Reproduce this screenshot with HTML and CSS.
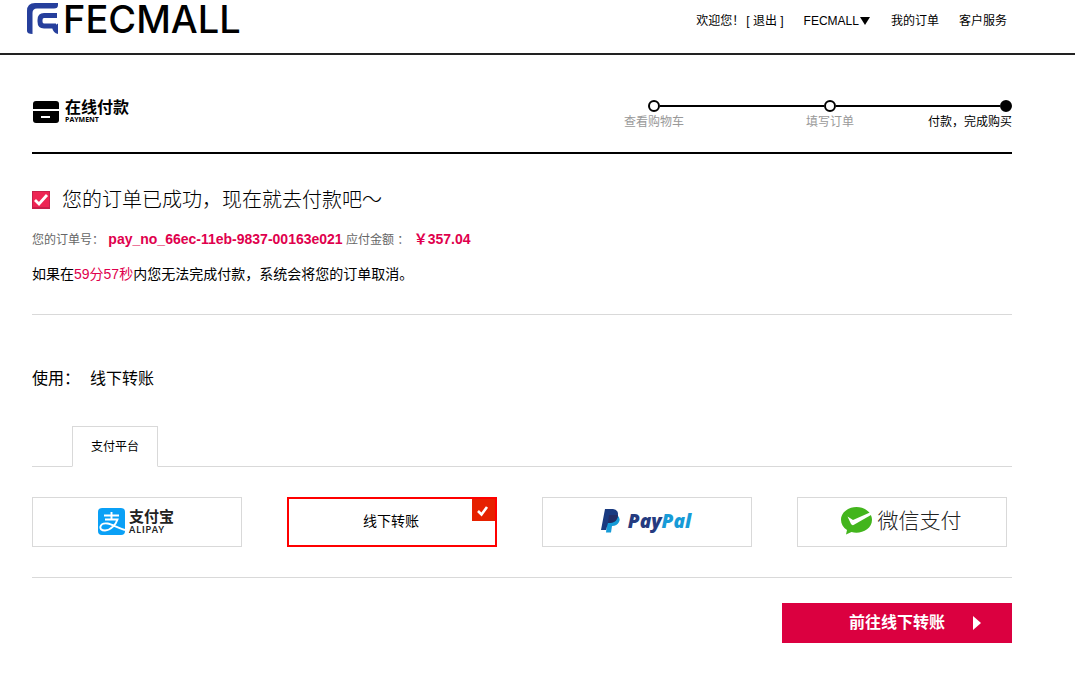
FILE: index.html
```html
<!DOCTYPE html>
<html lang="zh-CN">
<head>
<meta charset="utf-8">
<meta name="viewport" content="width=device-width, initial-scale=1">
<title>在线付款 - FECMALL</title>
<link rel="stylesheet" href="styles.css">
</head>
<body>
<header class="site-header">
  <a class="brand" href="#">
    <svg class="brand-mark" viewBox="0 0 32 32" aria-hidden="true">
      <path d="M0 28V8Q0 0 8 0H31V2Q31 5.500 27 5.500H10Q5.500 5.500 5.500 10V31Q0 31 0 28Z" fill="#263f9c"/>
      <path d="M30 12.500H17Q13 12.500 13 17V18.500Q13 23 17 23H29" fill="none" stroke="#263f9c" stroke-width="5"/>
      <path d="M25 24L31 20.500V31Q26 30 25 24Z" fill="#263f9c"/>
    </svg>
    <span class="brand-name">FECMALL</span>
  </a>
  <nav class="site-nav">
    <span class="welcome"><span>欢迎您！</span><a href="#">[ 退出 ]</a></span>
    <a href="#">FECMALL<svg class="caret" viewBox="0 0 10 8" aria-hidden="true"><path d="M0 0H10L5 8Z"/></svg></a>
    <a href="#">我的订单</a>
    <a href="#">客户服务</a>
  </nav>
</header>

<main class="page">
  <section class="page-head">
    <div class="page-title">
      <svg class="card-icon" viewBox="0 0 26 22" aria-hidden="true">
        <path d="M0 8V3Q0 0 3 0H23Q26 0 26 3V8Z"/>
        <path d="M0 10H26V19Q26 22 23 22H3Q0 22 0 19Z"/>
        <path d="M8 15H17V17H8Z" fill="#fff"/>
      </svg>
      <div>
        <h1>在线付款</h1>
        <p>PAYMENT</p>
      </div>
    </div>
    <ol class="steps">
      <li class="step">查看购物车</li>
      <li class="step">填写订单</li>
      <li class="step step-current" aria-current="step">付款，完成购买</li>
    </ol>
  </section>

  <section class="order">
    <h2 class="order-title">
      <svg class="ok-icon" viewBox="0 0 18 18" aria-hidden="true">
        <rect width="18" height="18" fill="#c7204b"/>
        <rect x="1" y="1" width="16" height="15" fill="#ee2554"/>
        <path d="M3 9L7 13L15 4" fill="none" stroke="#fff" stroke-width="2.800"/>
      </svg>
      您的订单已成功，现在就去付款吧～
    </h2>
    <p class="order-info">您的订单号： <strong>pay_no_66ec-11eb-9837-00163e021</strong> 应付金额 ： <strong>￥357.04</strong></p>
    <p class="order-note">如果在<span class="countdown">59分57秒</span>内您无法完成付款，系统会将您的订单取消。</p>
  </section>

  <form class="pay-form">
    <p class="using"><span>使用：</span><span>线下转账</span></p>
    <div class="tabs" role="tablist">
      <button class="tab" type="button" role="tab" aria-selected="true">支付平台</button>
    </div>
    <div class="options" role="radiogroup" aria-label="支付平台">
      <label class="option">
        <input type="radio" name="pay" value="alipay">
        <svg class="alipay-icon" viewBox="0 0 27 27" aria-hidden="true">
          <rect width="27" height="27" rx="4" fill="#0aa0f6"/>
          <path d="M6 7.500H21M13.500 4V11.500M7 11.500H19.500C18 16 13 22.500 7 22.500C3 22.500 2 20.500 2.500 18.500C3.200 16 6 15 9.500 15.500C14 16.200 19 19.500 27 22" fill="none" stroke="#fff" stroke-width="1.900"/>
        </svg>
        <span class="alipay-text"><b>支付宝</b><span>ALIPAY</span></span>
      </label>
      <label class="option">
        <input type="radio" name="pay" value="offline" checked>
        <span>线下转账</span>
        <svg class="badge" viewBox="0 0 23 22" aria-hidden="true">
          <rect width="23" height="22" fill="#e62100"/>
          <path d="M6 12L9.500 15.500L15 8" fill="none" stroke="#fff" stroke-width="2.600"/>
        </svg>
      </label>
      <label class="option">
        <input type="radio" name="pay" value="paypal">
        <svg class="paypal-icon" viewBox="0 0 19 24" aria-hidden="true">
          <path d="M7 6H16Q20 9 18 13Q16 17 11 17L10 23.500H5Z" fill="#169bd7"/>
          <path d="M4 0H12Q18 1 17 7Q15 14 8 14H7L5 21H0Z" fill="#193a80"/>
          <path d="M8 6H17Q17 13 9 14H7Z" fill="#222d65"/>
        </svg>
        <span class="paypal-text">Pay<span>Pal</span></span>
      </label>
      <label class="option">
        <input type="radio" name="pay" value="wechat">
        <svg class="wechat-icon" viewBox="0 0 31 28" aria-hidden="true">
          <path d="M15.500 0C7 0 0 5.600 0 12.800C0 17 2.200 20.700 6 23L5 27.500L10.500 25C19 27.500 31 23 31 12.800C31 5.600 24 0 15.500 0Z" fill="#43b51d"/>
          <path d="M6.500 9.500L12 13L30 5V8L12.500 18Q11 18.500 10 17Z" fill="#fff"/>
        </svg>
        <span class="wechat-text">微信支付</span>
      </label>
    </div>
    <div class="actions">
      <button class="submit" type="submit"><span>前往线下转账</span>
        <svg class="arrow" viewBox="0 0 8 14" aria-hidden="true"><path d="M0 0L8 7L0 14Z"/></svg>
      </button>
    </div>
  </form>
</main>
</body>
</html>
```
FILE: styles.css
```css
*, *::before, *::after { box-sizing: border-box; }

body {
  margin: 0;
  background: #fff;
  color: #000;
  font: 12px/16px "Liberation Sans", "Noto Sans CJK SC", sans-serif;
}

h1, h2, p, ol { margin: 0; padding: 0; }
a { color: inherit; text-decoration: none; }
button { font: inherit; cursor: pointer; }

.site-header {
  display: flex;
  justify-content: space-between;
  align-items: flex-start;
  height: 55px;
  padding: 0 68px 0 27px;
  border-bottom: 2px solid #222;
}
.brand { display: flex; align-items: center; gap: 4px; height: 38px; }
.brand-mark { width: 32px; height: 32px; }
.brand-name { font: 500 38px/38px Inter, sans-serif; }
.site-nav { display: flex; gap: 20px; padding-top: 13px; }
.welcome { display: flex; gap: 2px; }
.caret { width: 10px; height: 8px; margin: 0 1px; }

.page { padding: 0 63px 32px 32px; }

.page-head {
  display: flex;
  justify-content: space-between;
  align-items: flex-start;
  height: 99px;
  padding-top: 45px;
  border-bottom: 2px solid #000;
}
.page-title { display: flex; align-items: center; gap: 6px; padding-left: 1px; }
.card-icon { width: 26px; height: 22px; }
.page-title h1 { font-size: 16px; font-weight: 700; line-height: 16px; }
.page-title p { font: 700 7px/8px "Open Sans", sans-serif; }

.steps { display: flex; list-style: none; color: #999; }
.step {
  position: relative;
  display: flex;
  flex-direction: column;
  align-items: center;
  gap: 2px;
  width: 176px;
}
.step::before {
  content: "";
  width: 12px;
  height: 12px;
  border: 2px solid #000;
  border-radius: 50%;
}
.step::after {
  content: "";
  position: absolute;
  top: 5px;
  left: calc(50% + 6px);
  width: calc(100% - 12px);
  height: 2px;
  background: #000;
}
.step-current { align-items: flex-end; width: 94px; color: #000; }
.step-current::before { background: #000; }
.step-current::after { display: none; }

.order { padding: 34px 0 30px; border-bottom: 1px solid #d9d9d9; }
.order-title {
  display: flex;
  align-items: center;
  gap: 12px;
  font-size: 20px;
  font-weight: 300;
  line-height: 24px;
}
.ok-icon { width: 18px; height: 18px; }
.order-info { margin-top: 17px; line-height: 20px; color: #666; }
.order-info strong { margin-left: 1px; font-size: 14px; color: #e0004d; }
.order-note { margin-top: 14px; font-size: 14px; line-height: 20px; }
.countdown { color: #e0004d; }

.using { display: flex; gap: 10px; padding-top: 52px; font-size: 16px; line-height: 24px; }

.tabs { display: flex; height: 41px; margin-top: 35px; padding-left: 40px; border-bottom: 1px solid #d9d9d9; }
.tab {
  height: 41px;
  padding: 0 18px;
  border: 1px solid #d9d9d9;
  border-bottom-color: #fff;
  background: #fff;
  color: #000;
}

.options {
  display: grid;
  grid-template-columns: repeat(4, 1fr);
  gap: 45px;
  padding: 30px 5px 30px 0;
}
.option {
  position: relative;
  display: flex;
  align-items: center;
  justify-content: center;
  height: 50px;
  padding: 0 2px 2px 0;
  border: 1px solid #d9d9d9;
  font-size: 14px;
  cursor: pointer;
}
.option:has(input:checked) { border: 2px solid #f00; }
.option input { position: absolute; opacity: 0; pointer-events: none; }
.badge { position: absolute; top: 0; right: 0; width: 23px; height: 22px; }

.alipay-icon { width: 27px; height: 27px; margin-right: 4px; }
.alipay-text { display: flex; flex-direction: column; color: #222; }
.alipay-text b { font-size: 15px; line-height: 16px; }
.alipay-text span { font: 700 9px/9px Lato, sans-serif; letter-spacing: 1px; }
.paypal-icon { width: 19px; height: 24px; margin-right: 8px; }
.paypal-text { font: italic 800 19px/24px "Open Sans", sans-serif; color: #253b80; }
.paypal-text span { color: #179bd7; }
.wechat-icon { width: 31px; height: 28px; margin-right: 6px; }
.wechat-text { font-size: 21px; line-height: 28px; font-weight: 300; color: #222; }

.actions { display: flex; justify-content: flex-end; padding-top: 25px; border-top: 1px solid #d9d9d9; }
.submit {
  display: flex;
  align-items: center;
  justify-content: flex-end;
  gap: 28px;
  width: 230px;
  height: 40px;
  padding: 0 31px;
  border: 0;
  background: #db0040;
  color: #fff;
  font-size: 16px;
  font-weight: 700;
}
.arrow { width: 8px; height: 14px; fill: #fff; }
```
